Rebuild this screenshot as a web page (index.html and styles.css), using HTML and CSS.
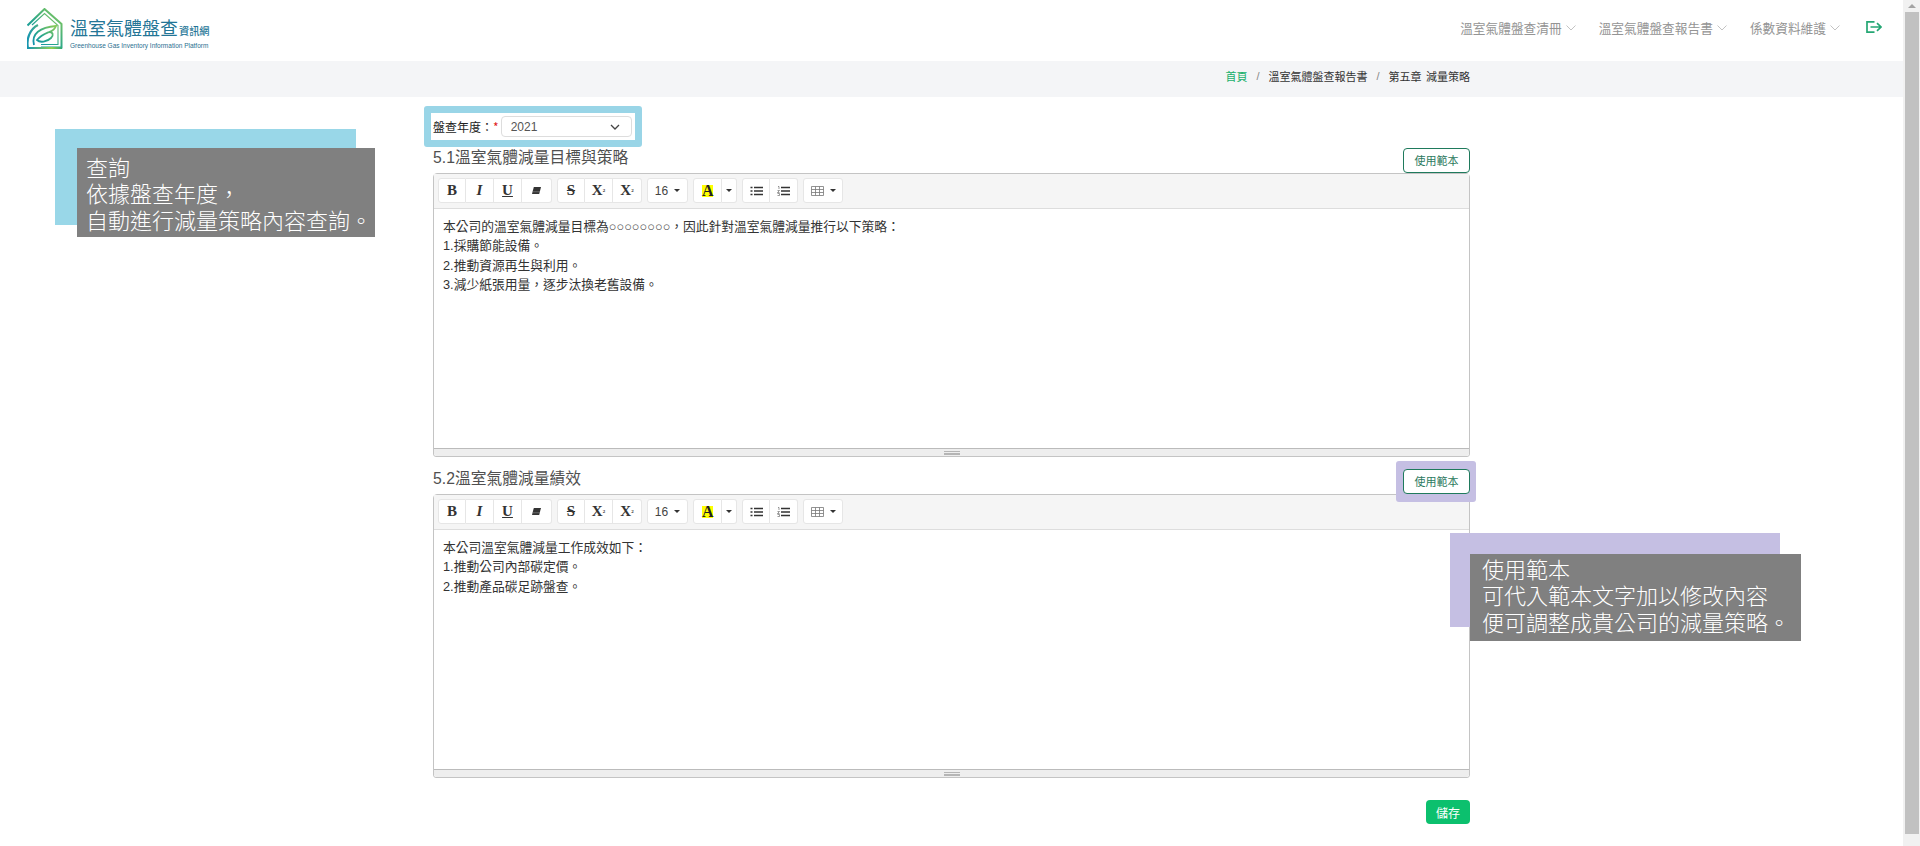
FILE: index.html
```html
<!DOCTYPE html>
<html lang="zh-Hant">
<head>
<meta charset="utf-8">
<title>溫室氣體盤查資訊網</title>
<link rel="stylesheet" href="styles.css">
</head>
<body>
<div class="app">
  <div class="page">
    <header class="topbar">
      <a class="logo">
        <svg class="logo-mark" viewBox="0 0 36 41" width="36" height="41" aria-hidden="true">
          <defs>
            <linearGradient id="lg" x1="0" y1="1" x2="0.9" y2="0">
              <stop offset="0" stop-color="#0f8fb0"/>
              <stop offset="0.45" stop-color="#25a58e"/>
              <stop offset="1" stop-color="#86c95a"/>
            </linearGradient>
            <linearGradient id="lb" x1="0" y1="0" x2="1" y2="0">
              <stop offset="0" stop-color="#1795b0"/>
              <stop offset="0.7" stop-color="#8fd04f"/>
              <stop offset="1" stop-color="#2aa77c"/>
            </linearGradient>
          </defs>
          <path d="M0.5 17.5 L17.5 1 L34.5 16 V39.5 H14" fill="none" stroke="url(#lg)" stroke-width="2"/>
          <path d="M5 17 L17.5 5.5 L31 17.5 V36.5 H14" fill="none" stroke="url(#lg)" stroke-width="1.1"/>
          <path d="M11 17 C3 21 -1 31 1 40 H35" fill="none" stroke="url(#lb)" stroke-width="2.2"/>
          <path d="M7 37 C4 26 13 19 29 18 C28 21 25 23 22 24 C26 24 27 27 24 30 C20 34 13 35 10 32 C14 27 17 26 22 24" fill="none" stroke="url(#lg)" stroke-width="1.8"/>
        </svg>
        <span class="logo-text">
          <span class="logo-zh">溫室氣體盤查<small class="logo-small">資訊網</small></span>
          <span class="logo-en">Greenhouse Gas Inventory Information Platform</span>
        </span>
      </a>
      <nav class="nav">
        <a class="nav-item">溫室氣體盤查清冊<svg class="nav-chev" viewBox="0 0 10 6" width="10" height="6"><path d="M0.5 0.5 L5 5 L9.5 0.5"/></svg></a>
        <a class="nav-item">溫室氣體盤查報告書<svg class="nav-chev" viewBox="0 0 10 6" width="10" height="6"><path d="M0.5 0.5 L5 5 L9.5 0.5"/></svg></a>
        <a class="nav-item">係數資料維護<svg class="nav-chev" viewBox="0 0 10 6" width="10" height="6"><path d="M0.5 0.5 L5 5 L9.5 0.5"/></svg></a>
        <svg class="logout" viewBox="0 0 16 12" width="16" height="12" aria-hidden="true">
          <path d="M8.5 0.8 H1 V11.2 H8.5 M4.5 6 H15 M11 2.2 L15 6 L11 9.8"/>
        </svg>
      </nav>
    </header>

    <div class="crumbbar">
      <ol class="crumbs">
        <li class="crumb-home">首頁</li>
        <li class="crumb-sep">/</li>
        <li>溫室氣體盤查報告書</li>
        <li class="crumb-sep">/</li>
        <li class="crumb-last">第五章 減量策略</li>
      </ol>
    </div>

    <main class="content">
      <div class="year-row">
        <label class="year-label">盤查年度：<span class="req">*</span></label>
        <div class="year-select">
          <span>2021</span>
          <svg viewBox="0 0 10 6" width="10" height="6" aria-hidden="true"><path d="M1 1 L5 5 L9 1"/></svg>
        </div>
      </div>

      <section class="section">
        <div class="section-head">
          <h2 class="section-title">5.1溫室氣體減量目標與策略</h2>
          <button class="tpl-btn">使用範本</button>
        </div>
        <div class="editor">
          <div class="toolbar">
            <div class="tb-group">
              <button class="tb w28 serif-b">B</button>
              <button class="tb w28 serif-i">I</button>
              <button class="tb w28 serif-u">U</button>
              <button class="tb w30"><svg viewBox="0 0 12 10" width="11" height="9"><path d="M3 1 H11 L9 9 H1 Z" fill="#333"/><path d="M2 6.4 H9.8" stroke="#999" stroke-width="0.6"/></svg></button>
            </div>
            <div class="tb-group">
              <button class="tb w28 serif-s">S</button>
              <button class="tb w28 serif-b">X<sup class="tiny">2</sup></button>
              <button class="tb w29 serif-b">X<sub class="tiny">2</sub></button>
            </div>
            <div class="tb-group">
              <button class="tb w41 plain">16<i class="caret"></i></button>
            </div>
            <div class="tb-group">
              <button class="tb w29"><span class="hl-a">A</span></button>
              <button class="tb w15"><i class="caret flush"></i></button>
            </div>
            <div class="tb-group">
              <button class="tb w28"><svg viewBox="0 0 13 10" width="13" height="10"><path d="M4 1.5 H13 M4 5 H13 M4 8.5 H13" stroke="#333" stroke-width="1.5"/><path d="M0.5 1.5 H2.5 M0.5 5 H2.5 M0.5 8.5 H2.5" stroke="#333" stroke-width="1.5"/></svg></button>
              <button class="tb w28"><svg viewBox="0 0 13 10" width="13" height="10"><path d="M4 1.5 H13 M4 5 H13 M4 8.5 H13" stroke="#333" stroke-width="1.5"/><path d="M1 0.5 H2 V3 M0.5 4.5 H2.5 L0.5 6.5 H2.5 M0.5 7.5 H2.5 V9.5 H0.5" stroke="#555" stroke-width="0.6" fill="none"/></svg></button>
            </div>
            <div class="tb-group">
              <button class="tb w40"><svg viewBox="0 0 13 10" width="13" height="10"><path d="M0.5 0.5 H12.5 V9.5 H0.5 Z M4.5 0.5 V9.5 M8.5 0.5 V9.5 M0.5 3.5 H12.5 M0.5 6.5 H12.5" fill="none" stroke="#777" stroke-width="0.8"/></svg><i class="caret"></i></button>
            </div>
          </div>
          <div class="editable">
            <p>本公司的溫室氣體減量目標為○○○○○○○○，因此針對溫室氣體減量推行以下策略：</p>
            <p>1.採購節能設備。</p>
            <p>2.推動資源再生與利用。</p>
            <p>3.減少紙張用量，逐步汰換老舊設備。</p>
          </div>
          <div class="statusbar"><i class="grip"></i></div>
        </div>
      </section>

      <section class="section section-2">
        <div class="section-head">
          <h2 class="section-title">5.2溫室氣體減量績效</h2>
          <span class="tpl-ring"><button class="tpl-btn">使用範本</button></span>
        </div>
        <div class="editor">
          <div class="toolbar">
            <div class="tb-group">
              <button class="tb w28 serif-b">B</button>
              <button class="tb w28 serif-i">I</button>
              <button class="tb w28 serif-u">U</button>
              <button class="tb w30"><svg viewBox="0 0 12 10" width="11" height="9"><path d="M3 1 H11 L9 9 H1 Z" fill="#333"/><path d="M2 6.4 H9.8" stroke="#999" stroke-width="0.6"/></svg></button>
            </div>
            <div class="tb-group">
              <button class="tb w28 serif-s">S</button>
              <button class="tb w28 serif-b">X<sup class="tiny">2</sup></button>
              <button class="tb w29 serif-b">X<sub class="tiny">2</sub></button>
            </div>
            <div class="tb-group">
              <button class="tb w41 plain">16<i class="caret"></i></button>
            </div>
            <div class="tb-group">
              <button class="tb w29"><span class="hl-a">A</span></button>
              <button class="tb w15"><i class="caret flush"></i></button>
            </div>
            <div class="tb-group">
              <button class="tb w28"><svg viewBox="0 0 13 10" width="13" height="10"><path d="M4 1.5 H13 M4 5 H13 M4 8.5 H13" stroke="#333" stroke-width="1.5"/><path d="M0.5 1.5 H2.5 M0.5 5 H2.5 M0.5 8.5 H2.5" stroke="#333" stroke-width="1.5"/></svg></button>
              <button class="tb w28"><svg viewBox="0 0 13 10" width="13" height="10"><path d="M4 1.5 H13 M4 5 H13 M4 8.5 H13" stroke="#333" stroke-width="1.5"/><path d="M1 0.5 H2 V3 M0.5 4.5 H2.5 L0.5 6.5 H2.5 M0.5 7.5 H2.5 V9.5 H0.5" stroke="#555" stroke-width="0.6" fill="none"/></svg></button>
            </div>
            <div class="tb-group">
              <button class="tb w40"><svg viewBox="0 0 13 10" width="13" height="10"><path d="M0.5 0.5 H12.5 V9.5 H0.5 Z M4.5 0.5 V9.5 M8.5 0.5 V9.5 M0.5 3.5 H12.5 M0.5 6.5 H12.5" fill="none" stroke="#777" stroke-width="0.8"/></svg><i class="caret"></i></button>
            </div>
          </div>
          <div class="editable">
            <p>本公司溫室氣體減量工作成效如下：</p>
            <p>1.推動公司內部碳定價。</p>
            <p>2.推動產品碳足跡盤查。</p>
          </div>
          <div class="statusbar"><i class="grip"></i></div>
        </div>
      </section>

      <div class="actions">
        <button class="save-btn">儲存</button>
      </div>
    </main>

    <aside class="callout callout-query">
      <div class="callout-back"></div>
      <div class="callout-note">查詢<br>依據盤查年度，<br>自動進行減量策略內容查詢。</div>
    </aside>
    <aside class="callout callout-tpl">
      <div class="callout-back"></div>
      <div class="callout-note">使用範本<br>可代入範本文字加以修改內容<br>便可調整成貴公司的減量策略。</div>
    </aside>
  </div>

  <div class="scrollbar">
    <i class="sb-up"></i>
    <div class="sb-thumb"></div>
  </div>
</div>
</body>
</html>
```
FILE: styles.css
```css
* { box-sizing: border-box; }
html, body { margin: 0; height: 100%; overflow: hidden; background: #fff; }
body {
  font-family: "Liberation Sans", "Noto Sans CJK TC", sans-serif;
  color: #333;
  font-size: 13px;
}
.app { display: flex; height: 846px; }
.page { flex: 1; min-width: 0; position: relative; }

/* scrollbar */
.scrollbar {
  width: 17px;
  background: #f1f1f1;
  display: flex;
  flex-direction: column;
  align-items: center;
  padding-top: 4px;
}
.sb-up {
  width: 0; height: 0;
  border-left: 4px solid transparent;
  border-right: 4px solid transparent;
  border-bottom: 4px solid #a3a3a3;
  margin-bottom: 4px;
}
.sb-thumb { width: 14px; height: 822px; background: #c1c1c1; }

/* top bar */
.topbar {
  height: 61px;
  display: flex;
  align-items: center;
  justify-content: space-between;
  padding: 0 21px 0 27px;
}
.logo { display: flex; align-items: flex-start; gap: 7px; height: 61px; padding-top: 8px; }
.logo-mark { display: block; flex: none; }
.logo-text { display: flex; flex-direction: column; padding-top: 9px; color: #237596; }
.logo-zh {
  font-family: "Noto Sans CJK TC", sans-serif;
  font-size: 18px;
  line-height: 20px;
  white-space: nowrap;
  font-weight: 400;
}
.logo-small { font-size: 10.2px; margin-left: 1px; font-weight: 500; }
.logo-en {
  font-size: 6.5px;
  line-height: 9px;
  white-space: nowrap;
  color: #2a6f8f;
}
.nav { display: flex; align-items: center; gap: 23px; margin-bottom: 5px; }
.nav-item {
  display: flex;
  align-items: center;
  gap: 4px;
  font-family: "Noto Sans CJK TC", sans-serif;
  font-size: 12.7px;
  line-height: 16px;
  color: #949494;
  white-space: nowrap;
}
.nav-chev { fill: none; stroke: #b4b4b4; stroke-width: 0.8; }
.logout {
  margin-left: 3px;
  fill: none;
  stroke: #25a774;
  stroke-width: 1.7;
  position: relative;
  top: -1px;
}

/* breadcrumb */
.crumbbar { height: 36px; background: #f4f5f7; display: flex; justify-content: center; align-items: center; }
.crumbs {
  width: 1037px;
  margin: 0 0 6px;
  padding: 0;
  list-style: none;
  display: flex;
  justify-content: flex-end;
  gap: 9px;
  font-family: "Noto Sans CJK TC", sans-serif;
  font-size: 11px;
  line-height: 16px;
  color: #333;
}
.crumb-home { color: #17b06a; }
.crumb-sep { color: #888; font-family: "Liberation Sans", sans-serif; }
.crumb-last { word-spacing: 2px; }

/* content */
.content {
  width: 1037px;
  margin: 0 auto;
  padding-top: 9px;
}
.year-row {
  width: 218px;
  height: 41px;
  margin-left: -9px;
  border: 7px solid #99d5e7;
  border-radius: 3px;
  padding: 3px 3px 3px 2px;
  display: flex;
  align-items: center;
  gap: 2px;
  background: #fff;
}
.year-label {
  font-family: "Noto Sans CJK TC", sans-serif;
  font-size: 12px;
  line-height: 21px;
  color: #222;
  white-space: nowrap;
}
.req { color: #e02020; }
.year-select {
  flex: 1;
  height: 21px;
  border: 1px solid #ddd;
  border-radius: 4px;
  display: flex;
  align-items: center;
  justify-content: space-between;
  padding: 0 11px 0 9px;
  font-size: 12px;
  color: #555;
}
.year-select svg { fill: none; stroke: #444; stroke-width: 1.3; }

.section { margin-top: 1px; }
.section-2 { margin-top: 12px; }
.section-head {
  display: flex;
  justify-content: space-between;
  align-items: flex-start;
  height: 25px;
}
.section-title {
  margin: 0;
  font-family: "Liberation Sans", "Noto Sans CJK TC", sans-serif;
  font-size: 15.75px;
  font-weight: 400;
  line-height: 20px;
  color: #505050;
}
.tpl-btn {
  display: block;
  width: 67px;
  height: 25px;
  padding: 0;
  border: 1px solid #1f7a5c;
  border-radius: 4px;
  background: #fff;
  color: #2d7a60;
  font-family: "Noto Sans CJK TC", sans-serif;
  font-size: 11px;
  line-height: 23px;
}
.tpl-ring {
  position: relative;
  z-index: 2;
  display: block;
  margin: -8px -6px -8px -7px;
  padding: 8px 6px 8px 7px;
  background: #c5bfe3;
  border-radius: 3px;
}

/* editor */
.editor {
  height: 284px;
  border: 1px solid #c4c4c4;
  border-radius: 4px 4px 3px 3px;
  display: flex;
  flex-direction: column;
}
.toolbar {
  height: 35px;
  flex: none;
  background: #f5f5f5;
  border-bottom: 1px solid #ddd;
  padding: 4px 0 0 4px;
  display: flex;
  gap: 5px;
}
.tb-group { display: flex; height: 25px; }
.tb {
  height: 25px;
  padding: 0;
  background: #fff;
  border: 1px solid #e6e6e6;
  border-left-width: 0;
  color: #333;
  display: flex;
  align-items: center;
  justify-content: center;
  font-size: 13px;
  line-height: 1;
}
.tb:first-child { border-left-width: 1px; border-radius: 3px 0 0 3px; }
.tb:last-child { border-radius: 0 3px 3px 0; }
.tb:only-child { border-radius: 3px; }
.w15 { width: 15px; }
.w28 { width: 28px; }
.w29 { width: 29px; }
.w30 { width: 30px; }
.w40 { width: 40px; }
.w41 { width: 41px; }
.serif-b, .serif-i, .serif-u, .serif-s { font-family: "Liberation Serif", serif; font-weight: 700; font-size: 15px; color: #333; }
.serif-i { font-style: italic; }
.serif-u { text-decoration: underline; }
.serif-s { text-decoration: line-through; }
.tiny { font-size: 5px; line-height: 0; }
.plain { font-size: 12px; color: #444; }
.hl-a {
  font-family: "Liberation Serif", serif;
  font-weight: 700;
  font-size: 16px;
  line-height: 12px;
  width: 11px;
  height: 12px;
  background: #ffff00;
  color: #222;
  display: block;
  text-align: center;
}
.caret {
  display: block;
  width: 0; height: 0;
  margin-left: 6px;
  border-left: 3px solid transparent;
  border-right: 3px solid transparent;
  border-top: 3px solid #333;
}
.caret.flush { margin-left: 0; }
.editable { flex: 1; padding: 8px 10px 10px 9px; background: #fff; }
.editable p {
  margin: 0;
  font-family: "Liberation Sans", "Noto Sans CJK TC", sans-serif;
  font-size: 12.75px;
  line-height: 19.25px;
  color: #333;
}
.statusbar {
  height: 8px;
  flex: none;
  background: #eee;
  border-top: 1px solid #bbb;
  border-radius: 0 0 3px 3px;
  display: flex;
  justify-content: center;
  padding-top: 2px;
}
.grip {
  display: block;
  width: 16px;
  height: 4px;
  border-top: 1px solid #b5b5b5;
  border-bottom: 2px solid #b5b5b5;
}

.actions { display: flex; justify-content: flex-end; margin-top: 22px; }
.save-btn {
  width: 44px;
  height: 24px;
  padding: 0;
  border: 0;
  border-radius: 4px;
  background: #0cc06e;
  color: #fff;
  font-family: "Noto Sans CJK TC", sans-serif;
  font-size: 12px;
}

/* annotation callouts */
.callout { position: absolute; }
.callout-back { position: absolute; left: 0; top: 0; }
.callout-note {
  position: absolute;
  background: #808080;
  color: #fff;
  font-family: "Noto Sans CJK TC", sans-serif;
  font-weight: 300;
  font-size: 22px;
  line-height: 26.4px;
  white-space: nowrap;
}
.callout-query { left: 55px; top: 129px; width: 320px; height: 108px; }
.callout-query .callout-back { width: 301px; height: 96px; background: #99d7e8; }
.callout-query .callout-note { left: 22px; top: 19px; width: 298px; height: 89px; padding: 5px 0 0 9px; }
.callout-tpl { left: 1450px; top: 533px; width: 351px; height: 108px; }
.callout-tpl .callout-back { width: 330px; height: 94px; background: #c5bfe3; }
.callout-tpl .callout-note { left: 20px; top: 21px; width: 331px; height: 87px; padding: 1px 0 0 12px; }
```
